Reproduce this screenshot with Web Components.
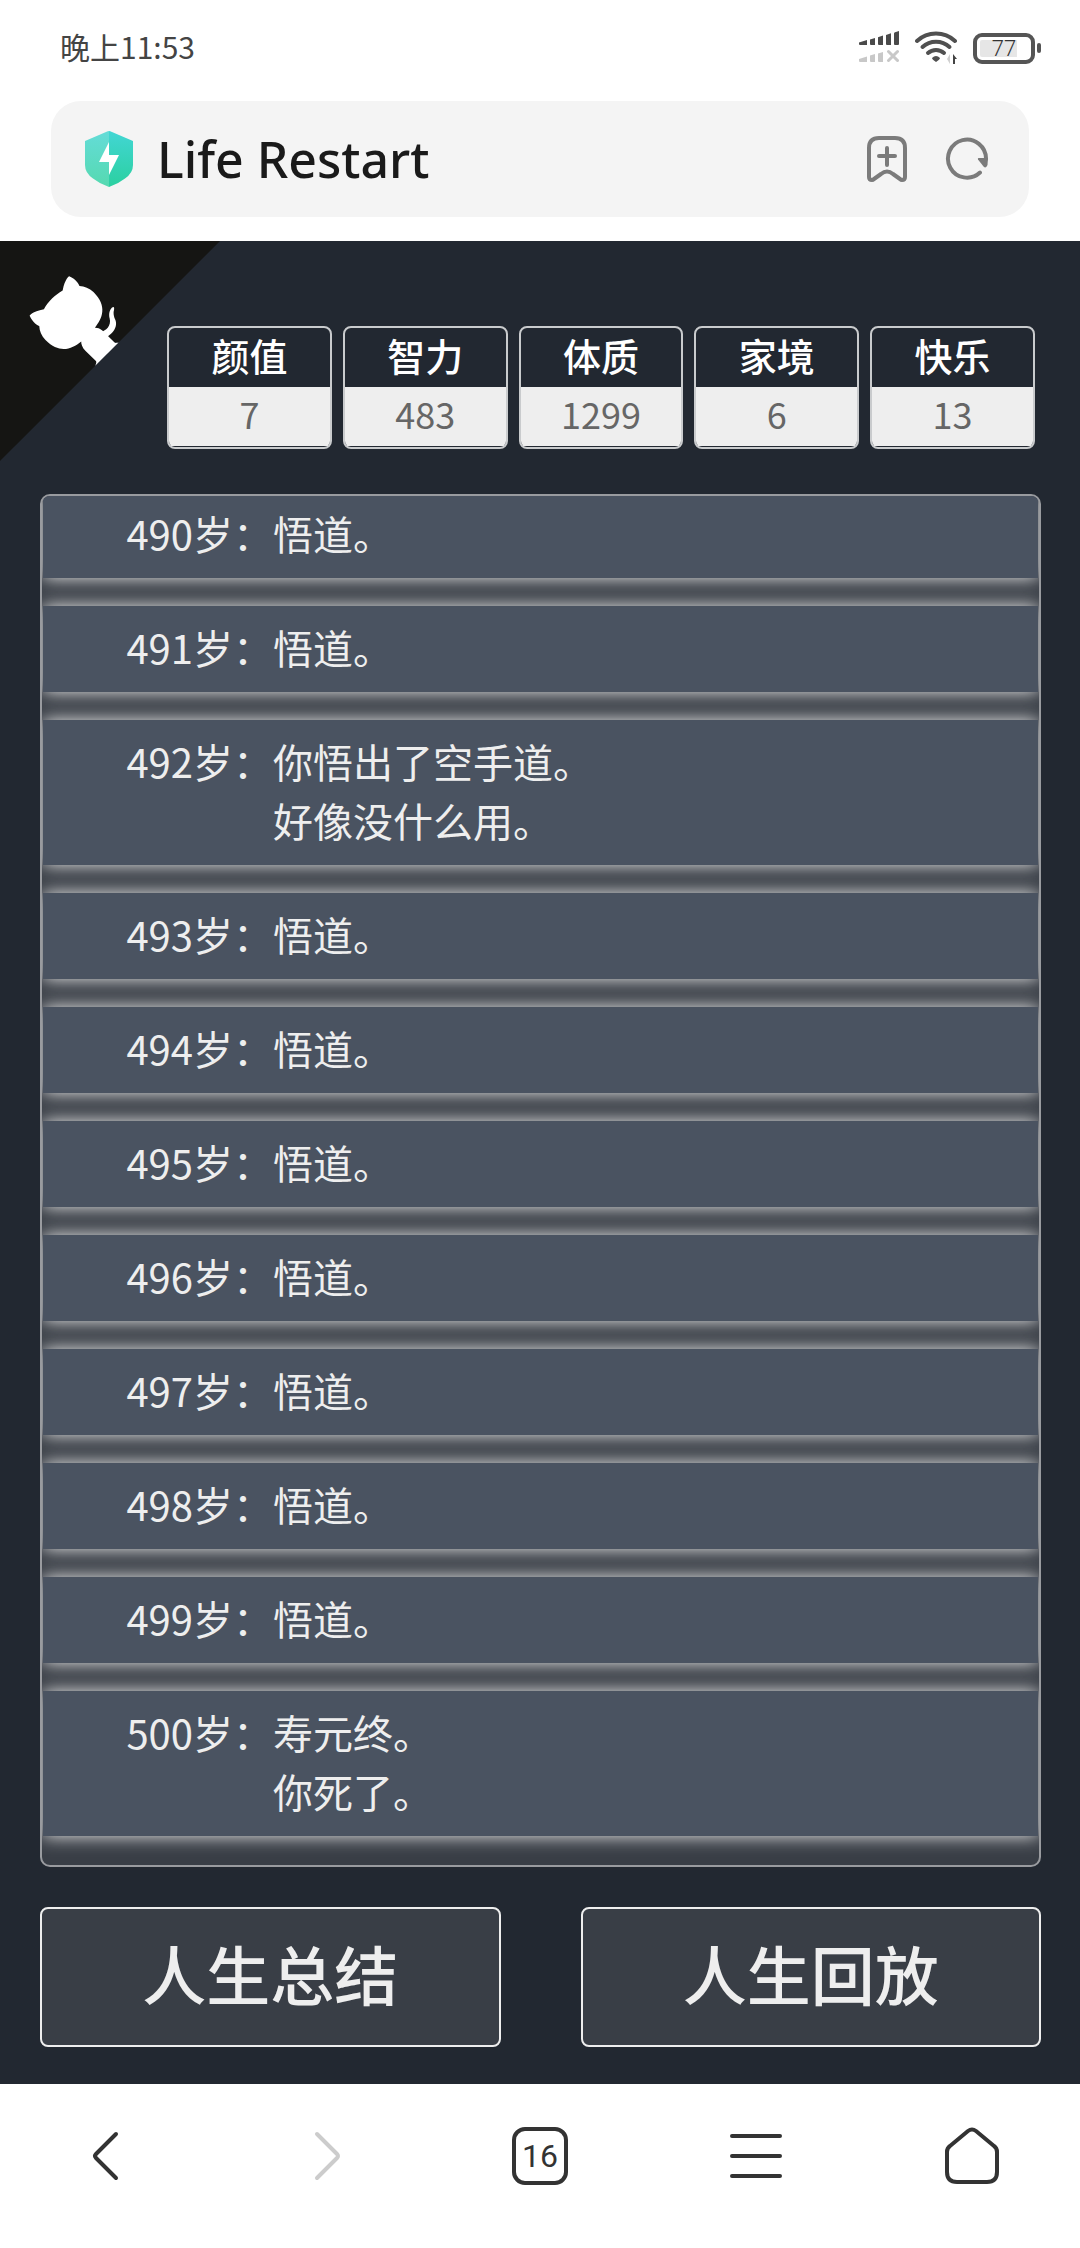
<!DOCTYPE html>
<html lang="zh-CN">
<head>
<meta charset="UTF-8">
<meta name="viewport" content="width=device-width, initial-scale=1.0">
<title>Life Restart</title>
<style>
  html, body {
    height: 100%;
    margin: 0;
  }

  body {
    background: #fff;
    font-family: "Noto Sans CJK SC", "Noto Sans", sans-serif;
    -webkit-text-size-adjust: 100%;
  }
</style>
</head>
<body>
<phone-screen>
  <status-bar slot="top" time="晚上11:53" battery="77"></status-bar>
  <address-bar slot="top" value="Life Restart"></address-bar>

  <life-page>
    <life-stat slot="stat" label="颜值">7</life-stat>
    <life-stat slot="stat" label="智力">483</life-stat>
    <life-stat slot="stat" label="体质">1299</life-stat>
    <life-stat slot="stat" label="家境">6</life-stat>
    <life-stat slot="stat" label="快乐">13</life-stat>

    <life-event age="490">悟道。</life-event>
    <life-event age="491">悟道。</life-event>
    <life-event age="492">你悟出了空手道。<br>好像没什么用。</life-event>
    <life-event age="493">悟道。</life-event>
    <life-event age="494">悟道。</life-event>
    <life-event age="495">悟道。</life-event>
    <life-event age="496">悟道。</life-event>
    <life-event age="497">悟道。</life-event>
    <life-event age="498">悟道。</life-event>
    <life-event age="499">悟道。</life-event>
    <life-event age="500">寿元终。<br>你死了。</life-event>

    <life-button slot="action">人生总结</life-button>
    <life-button slot="action">人生回放</life-button>
  </life-page>

  <nav-bar slot="bottom" tabs="16"></nav-bar>
</phone-screen>

<script>
class PhoneScreen extends HTMLElement {
  connectedCallback() {
    this.attachShadow({ mode: 'open' });
    this.shadowRoot.innerHTML = `
      <style>
        :host {
          display: flex;
          flex-direction: column;
          height: 100vh;
        }

        main {
          flex: 1;
          min-height: 0;
          display: flex;
        }
      </style>
      <header><slot name="top"></slot></header>
      <main><slot></slot></main>
      <slot name="bottom"></slot>
    `;
  }
}

class StatusBar extends HTMLElement {
  connectedCallback() {
    const battery = this.getAttribute('battery');

    this.attachShadow({ mode: 'open' });
    this.shadowRoot.innerHTML = `
      <style>
        :host {
          display: flex;
          justify-content: space-between;
          align-items: center;
          height: 96px;
          padding: 0 39px 0 60px;
          color: #444;
        }

        time {
          padding-bottom: 4px;
          font-size: 30px;
          line-height: 40px;
        }

        .icons {
          display: flex;
          align-items: center;
          gap: 16px;
        }

        svg {
          display: block;
        }

        .battery {
          display: flex;
          align-items: center;
          gap: 2px;
        }

        .cell {
          box-sizing: border-box;
          width: 62px;
          height: 31px;
          padding: 3px;
          border: 4px solid #555;
          border-radius: 9px;
        }

        .level {
          display: flex;
          justify-content: center;
          align-items: center;
          height: 17px;
          border-radius: 2px;
          background: linear-gradient(#e6e6e6, #e6e6e6) left / ${battery}% 100% no-repeat;
          color: #333;
          font: 300 22px/17px Roboto, sans-serif;
        }

        .nub {
          width: 4px;
          height: 10px;
          border-radius: 2px;
          background: #555;
        }
      </style>
      <time>${this.getAttribute('time')}</time>
      <div class="icons">
        <svg width="40" height="34" viewBox="0 0 40 34">
          <g fill="#4a4a4a">
            <path d="M0 11.5 8 9v5H1q-1 0-1-1z"/>
            <path d="M11 8.5 16 7v7h-4q-1 0-1-1z"/>
            <path d="M19 6.2 24 4.6V14h-4q-1 0-1-1z"/>
            <path d="M27 4 32 2.300V14h-4q-1 0-1-1z"/>
            <path d="M35 2.500q0-1 1-1.300L40 0v13q0 1-1 1h-3q-1 0-1-1z"/>
          </g>
          <g fill="#c8c8c8">
            <path d="M0 28 8 25.500V31H1q-1 0-1-1z"/>
            <path d="M11 24.500 16 23v8h-4q-1 0-1-1z"/>
            <path d="M19 22.500 24 21v10h-4q-1 0-1-1z"/>
          </g>
          <path d="m29.500 20.500 9 9m0-9-9 9" stroke="#c8c8c8" stroke-width="3" stroke-linecap="round"/>
        </svg>
        <svg width="42" height="34" viewBox="0 0 42 34">
          <g fill="none" stroke="#505050" stroke-width="4" stroke-linecap="round">
            <path d="M2 10a28 28 0 0 1 38 0"/>
            <path d="M7.500 16a20 20 0 0 1 27 0"/>
            <path d="M13 22a12 12 0 0 1 16 0"/>
          </g>
          <path d="M17 27q4-4 8 0 0 1.500-4 4-4-2.500-4-4z" fill="#505050"/>
          <path d="M35 23v10l-3-5z" fill="#d0d0d0"/>
          <path d="M38 23l4 5h-2v5h-2z" fill="#444"/>
        </svg>
        <div class="battery">
          <div class="cell"><div class="level">${battery}</div></div>
          <div class="nub"></div>
        </div>
      </div>
    `;
  }
}

class AddressBar extends HTMLElement {
  connectedCallback() {
    this.attachShadow({ mode: 'open' });
    this.shadowRoot.innerHTML = `
      <style>
        :host {
          display: block;
          padding: 5px 51px 24px;
        }

        form {
          display: flex;
          align-items: center;
          height: 116px;
          padding: 0 40px 0 34px;
          border-radius: 30px;
          background: #f4f4f4;
        }

        input {
          flex: 1;
          min-width: 0;
          margin: 0 24px;
          padding: 0;
          border: 0;
          outline: none;
          background: none;
          color: #1a1a1a;
          font: 500 50px/64px "Noto Sans", "Noto Sans CJK SC", sans-serif;
        }

        .tools {
          display: flex;
          gap: 36px;
        }

        button {
          padding: 0;
          border: 0;
          background: none;
        }

        svg {
          display: block;
        }
      </style>
      <form>
        <svg width="48" height="56" viewBox="0 0 48 56">
          <defs>
            <linearGradient id="left" x1="0" y1="0" x2="0" y2="1">
              <stop offset="0" stop-color="#64dcd8"/>
              <stop offset="1" stop-color="#55d9b0"/>
            </linearGradient>
            <linearGradient id="right" x1="0" y1="0" x2="0" y2="1">
              <stop offset="0" stop-color="#42d6d4"/>
              <stop offset="1" stop-color="#2bd0a0"/>
            </linearGradient>
          </defs>
          <path d="M24 0q-1 0-3 1L0 10v24q0 8 8 13.500Q15 53 24 56z" fill="url(#left)"/>
          <path d="M24 0q1 0 3 1l21 9v24q0 8-8 13.500Q33 53 24 56z" fill="url(#right)"/>
          <path d="M24 11v13h10L24 44V31H14z" fill="#fff"/>
        </svg>
        <input type="text" aria-label="网址" value="${this.getAttribute('value')}">
        <div class="tools">
          <button type="button" aria-label="添加书签">
            <svg width="44" height="48" viewBox="0 0 44 48" fill="none" stroke="#7b7b7b" stroke-width="4" stroke-linecap="round" stroke-linejoin="round">
              <path d="M4 13q0-10 10-10h16q10 0 10 10v29q0 3-3 3-1 0-2-1l-7-5q-6-5-12 0l-7 5q-1 1-2 1-3 0-3-3z"/>
              <path d="M22 13v17M14 21h16"/>
            </svg>
          </button>
          <button type="button" aria-label="刷新">
            <svg width="44" height="48" viewBox="0 0 44 48">
              <path d="M35 37.500A19 19 0 1 1 41 24" fill="none" stroke="#7b7b7b" stroke-width="4" stroke-linecap="round"/>
              <path d="M33.500 23h9.500l-.5 7q-1.500 4-4 1.500l-5.500-7q-.5-1.500.5-1.500z" fill="#7b7b7b"/>
            </svg>
          </button>
        </div>
      </form>
    `;
  }
}

class LifePage extends HTMLElement {
  connectedCallback() {
    this.attachShadow({ mode: 'open' });
    this.shadowRoot.innerHTML = `
      <style>
        :host {
          position: relative;
          flex: 1;
          min-width: 0;
          display: flex;
          flex-direction: column;
          padding: 0 39px 37px 40px;
          background: #222831;
        }

        .corner {
          position: absolute;
          top: 0;
          left: 0;
        }

        .corner svg {
          display: block;
          transform: scale(-1, 1);
        }

        .stats {
          display: flex;
          gap: 11px;
          padding: 85px 6px 45px 127px;
        }

        .log {
          flex: 1;
          min-height: 0;
          display: flex;
          flex-direction: column;
          justify-content: flex-end;
          gap: 28px;
          padding: 0 1px 29px;
          overflow: hidden;
          border: 2px solid #999b9f;
          border-radius: 10px;
          background: #393e46;
        }

        .actions {
          display: flex;
          gap: 80px;
          padding-top: 40px;
        }
      </style>
      <a class="corner" href="#" aria-label="View source on GitHub">
        <svg width="220" height="220" viewBox="0 0 250 250">
          <path d="M0 0L115 115L130 115L142 142L250 250L250 0Z" fill="#151513"/>
          <path d="M128.3 109C113.8 99.7 119 89.6 119 89.6C122 82.7 120.5 78.6 120.5 78.6C119.2 72 123.4 76.3 123.4 76.3C127.3 80.9 125.5 87.3 125.5 87.3C122.9 97.6 130.6 101.9 134.4 103.2" fill="#fff"/>
          <path d="M115 115C114.900 115.100 118.700 116.500 119.800 115.400L133.700 101.600C136.900 99.200 139.900 98.400 142.200 98.600C133.800 88 127.500 74.400 143.800 58C148.500 53.400 154 51.200 159.700 51C160.300 49.400 163.200 43.600 171.400 40.100C171.400 40.100 176.100 42.500 178.800 56.200C183.100 58.600 187.200 61.800 190.900 65.400C194.500 69 197.700 73.200 200.100 77.600C213.800 80.200 216.300 84.900 216.300 84.900C212.700 93.100 206.900 96 205.400 96.600C205.100 102.400 203 107.800 198.300 112.500C181.900 128.900 168.300 122.500 157.700 114.100C157.900 116.900 156.700 120.900 152.700 124.900L141 136.500C139.800 137.700 141.600 141.900 141.800 141.800Z" fill="#fff"/>
        </svg>
      </a>
      <div class="stats"><slot name="stat"></slot></div>
      <div class="log" role="list"><slot></slot></div>
      <div class="actions"><slot name="action"></slot></div>
    `;
  }
}

class LifeStat extends HTMLElement {
  connectedCallback() {
    this.attachShadow({ mode: 'open' });
    this.shadowRoot.innerHTML = `
      <style>
        :host {
          flex: 1;
          min-width: 0;
          overflow: hidden;
          padding-bottom: 1px;
          border: 2px solid #c9cbcd;
          border-radius: 8px;
          text-align: center;
          line-height: 53px;
        }

        .label,
        .value {
          padding-bottom: 6px;
        }

        .label {
          color: #fff;
          font-size: 38px;
          font-weight: 500;
        }

        .value {
          background: #eee;
          color: #666;
          font-size: 36px;
        }
      </style>
      <div class="label">${this.getAttribute('label')}</div>
      <div class="value"><slot></slot></div>
    `;
  }
}

class LifeEvent extends HTMLElement {
  connectedCallback() {
    this.setAttribute('role', 'listitem');
    this.attachShadow({ mode: 'open' });
    // the glow in the gaps between rows is the shadow of the rows themselves
    this.shadowRoot.innerHTML = `
      <style>
        :host {
          flex: none;
          display: flex;
          padding: 12px 0 15px;
          background: #4a5361;
          box-shadow: 0 0 17px #eee;
          color: #eee;
          font-size: 40px;
          line-height: 59px;
        }

        .age {
          flex: none;
          width: 230px;
          text-align: right;
        }
      </style>
      <span class="age">${this.getAttribute('age')}岁：</span>
      <div><slot></slot></div>
    `;
  }
}

class LifeButton extends HTMLElement {
  connectedCallback() {
    this.attachShadow({ mode: 'open' });
    this.shadowRoot.innerHTML = `
      <style>
        :host {
          flex: 1;
        }

        button {
          display: block;
          width: 100%;
          height: 140px;
          padding: 0 0 10px;
          border: 2px solid #eee;
          border-radius: 8px;
          background: #393e46;
          color: #eee;
          font: 500 64px/80px "Noto Sans CJK SC", "Noto Sans", sans-serif;
        }
      </style>
      <button type="button"><slot></slot></button>
    `;
  }
}

class NavBar extends HTMLElement {
  connectedCallback() {
    this.attachShadow({ mode: 'open' });
    this.shadowRoot.innerHTML = `
      <style>
        :host {
          display: block;
          background: #fff;
        }

        nav {
          display: flex;
          align-items: center;
          height: 144px;
          padding-bottom: 20px;
        }

        button {
          flex: 1;
          display: flex;
          justify-content: center;
          align-items: center;
          padding: 0;
          border: 0;
          background: none;
          color: #333;
        }

        button:disabled {
          color: #ccc;
        }

        svg {
          display: block;
          fill: none;
          stroke: currentColor;
          stroke-width: 4;
          stroke-linecap: round;
          stroke-linejoin: round;
        }

        .tabs {
          box-sizing: border-box;
          width: 56px;
          height: 58px;
          border: 4px solid #333;
          border-radius: 13px;
          font: 400 32px/50px Roboto, sans-serif;
          text-align: center;
        }
      </style>
      <nav>
        <button type="button" aria-label="后退">
          <svg width="60" height="60" viewBox="0 0 60 60"><path d="M38 8 18 28q-2 2 0 4l20 20"/></svg>
        </button>
        <button type="button" aria-label="前进" disabled>
          <svg width="60" height="60" viewBox="0 0 60 60"><path d="M23 8 43 28q2 2 0 4L23 52"/></svg>
        </button>
        <button type="button" aria-label="标签页"><span class="tabs">${this.getAttribute('tabs')}</span></button>
        <button type="button" aria-label="菜单">
          <svg width="60" height="60" viewBox="0 0 60 60"><path d="M6 10h48M6 30h48M6 50h48"/></svg>
        </button>
        <button type="button" aria-label="主页">
          <svg width="60" height="60" viewBox="0 0 60 60"><path d="M5 26q0-4 3-6L26 5q4-3 8 0l18 15q3 2 3 6v20q0 10-10 10H15Q5 56 5 46z"/></svg>
        </button>
      </nav>
    `;
  }
}

customElements.define('phone-screen', PhoneScreen);
customElements.define('status-bar', StatusBar);
customElements.define('address-bar', AddressBar);
customElements.define('life-page', LifePage);
customElements.define('life-stat', LifeStat);
customElements.define('life-event', LifeEvent);
customElements.define('life-button', LifeButton);
customElements.define('nav-bar', NavBar);
</script>
</body>
</html>
